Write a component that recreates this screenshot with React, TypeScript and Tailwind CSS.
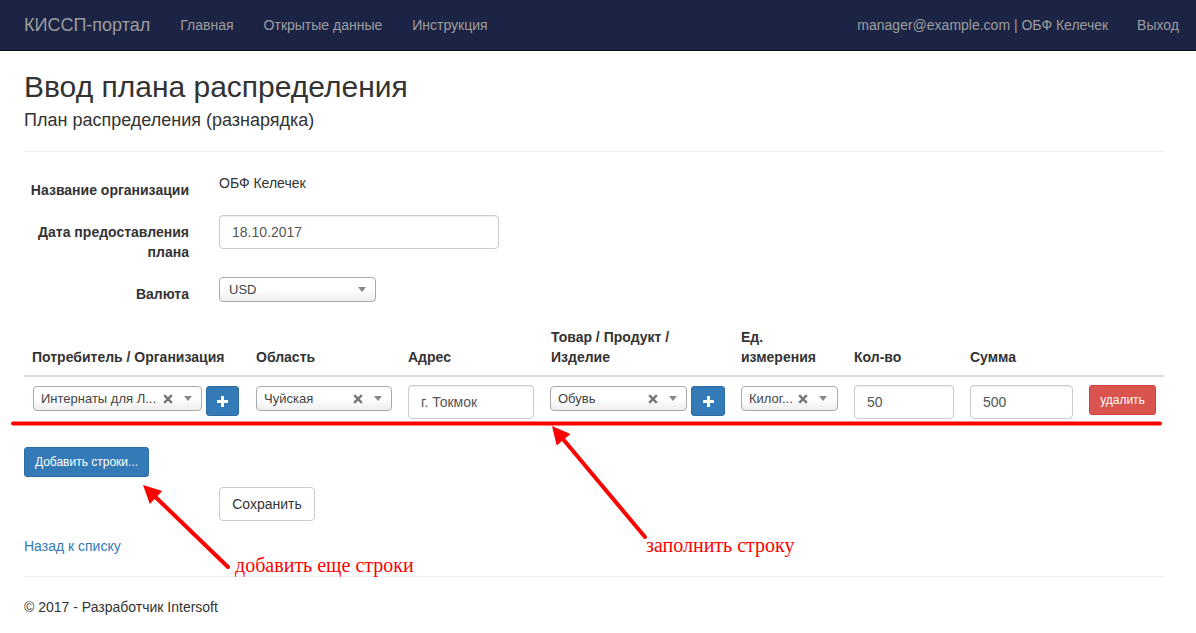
const navLinks = ["Главная", "Открытые данные", "Инструкция"];

const columns = [
    {label: "Потребитель / Организация", cell: "w-[224px]"},
    {label: "Область", cell: "w-[152px]"},
    {label: "Адрес", cell: "w-[143px]"},
    {label: "Товар / Продукт / Изделие", cell: "w-[190px]"},
    {label: "Ед. измерения", cell: "w-[113px]"},
    {label: "Кол-во", cell: "w-[116px]"},
    {label: "Сумма", cell: "w-[119px]"},
    {label: "", cell: "w-[83px]"},
];

function Caret() {
    return (
        <svg width="8" height="5" viewBox="0 0 8 5" className="shrink-0">
            <path d="M0 0 L8 0 L4 5 Z" fill="#888"/>
        </svg>
    );
}

function Cross() {
    return (
        <svg width="10" height="10" viewBox="0 0 10 10" className="shrink-0">
            <path d="M1.2 1.2 L8.8 8.8 M8.8 1.2 L1.2 8.8" stroke="#777" strokeWidth="2.4"/>
        </svg>
    );
}

function Select2({value, className, clear = true}: { value: string; className: string; clear?: boolean }) {
    return (
        <div
            className={`flex h-[25px] items-center rounded-[4px] border border-[#aaa] bg-linear-to-t from-[#eee] to-white to-50% pl-[7px] pr-[9px] text-[13px] text-[#444] ${className}`}>
            <span className="min-w-0 flex-1 whitespace-nowrap">{value}</span>
            {clear && <span className="ml-[2px] mr-[11px] flex"><Cross/></span>}
            <Caret/>
        </div>
    );
}

function Input({value, className}: { value: string; className: string }) {
    return (
        <div
            className={`flex h-[34px] items-center rounded-[4px] border border-[#ccc] px-[12px] text-[14px] text-[#555] shadow-[inset_0_1px_1px_rgba(0,0,0,0.075)] ${className}`}>
            {value}
        </div>
    );
}

function PlusButton({className}: { className: string }) {
    return (
        <button
            className={`flex h-[30px] items-center justify-center rounded-[3px] border border-[#2e6da4] bg-[#337ab7] ${className}`}>
            <svg width="11" height="11" viewBox="0 0 11 11">
                <path d="M4 0 H7 V4 H11 V7 H7 V11 H4 V7 H0 V4 H4 Z" fill="#fff"/>
            </svg>
        </button>
    );
}

export default function App() {
    return (
        <div className="relative min-h-[633px] w-full bg-white font-['Liberation_Sans',Arial,sans-serif] text-[14px] leading-[20px] text-[#333]">
            <nav className="flex h-[51px] items-center border-b border-[#080808] bg-[#1c2446] pr-[17px] text-[#9d9d9d]">
                <span className="ml-[24px] text-[18px]">КИССП-портал</span>
                {navLinks.map((item) => (
                    <span key={item} className="ml-[30px]">{item}</span>
                ))}
                <span className="ml-auto">manager@example.com | ОБФ Келечек</span>
                <span className="ml-[29px]">Выход</span>
            </nav>

            <main className="mx-[24px] w-[1140px]">
                <h2 className="mt-[19px] text-[30px] leading-[33px] font-normal">Ввод плана распределения</h2>
                <h4 className="mt-[7px] text-[18px] leading-[20px]">План распределения (разнарядка)</h4>
                <div className="mt-[21px] h-px bg-[#eee]"/>

                <div className="mt-[21px] flex flex-col gap-[15px]">
                    <div className="flex">
                        <label className="w-[165px] pt-[7px] text-right font-bold">Название организации</label>
                        <span className="ml-[30px]">ОБФ Келечек</span>
                    </div>
                    <div className="flex">
                        <label className="w-[165px] pt-[7px] text-right font-bold">Дата предоставления плана</label>
                        <Input value="18.10.2017" className="ml-[30px] w-[280px]"/>
                    </div>
                    <div className="flex">
                        <label className="w-[165px] pt-[7px] text-right font-bold">Валюта</label>
                        <Select2 value="USD" clear={false} className="ml-[30px] w-[157px] pl-[9px] pr-[9px]"/>
                    </div>
                </div>

                <div className="mt-[15px]">
                    <div className="flex border-b-2 border-[#ddd]">
                        {columns.map((c) => (
                            <div key={c.label} className={`flex items-end p-[8px] font-bold ${c.cell}`}>
                                <span className="h-[40px] content-end">{c.label}</span>
                            </div>
                        ))}
                    </div>
                    <div className="flex">
                        <div className="flex w-[224px] gap-[4px] p-[8px] pl-[9px]">
                            <Select2 value="Интернаты для Л..." className="mt-px w-[169px]"/>
                            <PlusButton className="mt-px w-[33px]"/>
                        </div>
                        <div className="w-[152px] p-[8px]">
                            <Select2 value="Чуйская" className="mt-px w-[136px]"/>
                        </div>
                        <div className="w-[143px] p-[8px]">
                            <Input value="г. Токмок" className="w-[126px]"/>
                        </div>
                        <div className="flex w-[190px] gap-[4px] p-[8px] pl-[7px]">
                            <Select2 value="Обувь" className="mt-px w-[137px]"/>
                            <PlusButton className="mt-px w-[34px]"/>
                        </div>
                        <div className="w-[113px] p-[8px]">
                            <Select2 value="Килог..." className="mt-px w-[97px] pr-[10px]"/>
                        </div>
                        <div className="w-[116px] p-[8px]">
                            <Input value="50" className="w-[100px]"/>
                        </div>
                        <div className="w-[119px] p-[8px]">
                            <Input value="500" className="w-[103px]"/>
                        </div>
                        <div className="w-[83px] p-[8px]">
                            <button className="h-[30px] w-[67px] rounded-[3px] border border-[#d43f3a] bg-[#d9534f] text-[12px] text-white">
                                удалить
                            </button>
                        </div>
                    </div>
                </div>

                <button className="mt-[20px] block h-[30px] w-[125px] rounded-[3px] border border-[#2e6da4] bg-[#337ab7] text-[12px] text-white">
                    Добавить строки...
                </button>
                <button className="mt-[10px] ml-[195px] block h-[34px] w-[96px] rounded-[4px] border border-[#ccc] bg-white text-[14px] text-[#333]">
                    Сохранить
                </button>
                <a className="mt-[15px] block text-[#337ab7]">Назад к списку</a>
                <div className="mt-[20px] h-px bg-[#eee]"/>
                <footer className="mt-[20px]">© 2017 - Разработчик Intersoft</footer>
            </main>

            {/* annotations drawn on top of the screenshot */}
            <svg className="pointer-events-none absolute left-0 top-0" width="1196" height="633">
                <line x1="13" y1="423.5" x2="1160" y2="423.5" stroke="#ff0000" strokeWidth="4" strokeLinecap="round"/>
                <line x1="228" y1="567" x2="156" y2="497.5" stroke="#ff0000" strokeWidth="4" strokeLinecap="round"/>
                <polygon points="143,485 162.2,491 149.8,504" fill="#ff0000"/>
                <line x1="645" y1="537" x2="563.6" y2="439.8" stroke="#ff0000" strokeWidth="4" strokeLinecap="round"/>
                <polygon points="552,426 570.5,434 556.7,445.6" fill="#ff0000"/>
            </svg>
            <span className="absolute left-[235px] top-[555px] font-['Liberation_Serif','Times_New_Roman',serif] text-[20px] leading-[20px] text-[#ff0000]">
                добавить еще строки
            </span>
            <span className="absolute left-[646px] top-[535px] font-['Liberation_Serif','Times_New_Roman',serif] text-[20px] leading-[20px] text-[#ff0000]">
                заполнить строку
            </span>
        </div>
    );
}
